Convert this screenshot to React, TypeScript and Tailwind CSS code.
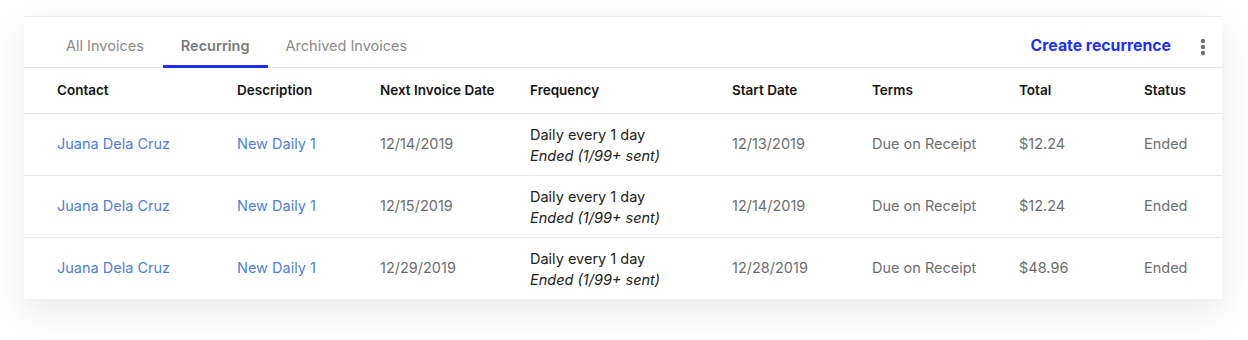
import React from 'react';

const rows = [
    { contact: 'Juana Dela Cruz', desc: 'New Daily 1', next: '12/14/2019', start: '12/13/2019', total: '$12.24' },
    { contact: 'Juana Dela Cruz', desc: 'New Daily 1', next: '12/15/2019', start: '12/14/2019', total: '$12.24' },
    { contact: 'Juana Dela Cruz', desc: 'New Daily 1', next: '12/29/2019', start: '12/28/2019', total: '$48.96' },
];

const cols = 'grid grid-cols-[213px_143px_150px_202px_140px_147px_125px_78px] items-center';

const App = () => {
    return (
        <div className="min-h-[340px] w-full bg-white pt-4 pl-6" style={{ fontFamily: 'Inter, "Noto Sans", sans-serif' }}>
            <div className="w-[1198px] bg-white border-t border-[#ececec] shadow-[0_12px_32px_rgba(0,0,0,0.09)]">
                <div className="flex h-[51px] items-stretch border-b border-[#e8e8e8] pl-[23px] pr-[16px]">
                    <div className="flex items-center px-[19px] pt-[8px] text-[14.5px] text-[#8a8a8a]">All Invoices</div>
                    <div className="relative flex items-center px-[18px] pt-[8px] text-[14.5px] font-semibold text-[#7a7a7a]">
                        Recurring
                        <span className="absolute left-0 right-0 -bottom-px h-[3px] bg-[#1f2ff5]"></span>
                    </div>
                    <div className="flex items-center px-[18px] pt-[8px] text-[14.5px] text-[#8a8a8a]">Archived Invoices</div>
                    <div className="ml-auto flex items-center gap-[29px] pt-[8px]">
                        <button className="text-[15.8px] font-bold text-[#2030f0]">Create recurrence</button>
                        <svg width="6" height="18" viewBox="0 0 6 18" className="mt-[1px]">
                            <circle cx="3" cy="3" r="2.2" fill="#6f6f6f" />
                            <circle cx="3" cy="9" r="2.2" fill="#6f6f6f" />
                            <circle cx="3" cy="15" r="2.2" fill="#6f6f6f" />
                        </svg>
                    </div>
                </div>

                <div className={`${cols} h-[46px] border-b border-[#e8e8e8] text-[13.5px] font-semibold text-[#151515]`}>
                    <div className="pl-[33px]">Contact</div>
                    <div>Description</div>
                    <div>Next Invoice Date</div>
                    <div>Frequency</div>
                    <div>Start Date</div>
                    <div>Terms</div>
                    <div>Total</div>
                    <div>Status</div>
                </div>

                {rows.map((r, i) => (
                    <div
                        key={i}
                        className={`${cols} ${i < rows.length - 1 ? 'h-[62px] border-b border-[#e8e8e8]' : 'h-[61px]'} text-[14.5px] text-[#6e6e6e]`}
                    >
                        <div className="pl-[33px] pb-px text-[#4f80d6]">{r.contact}</div>
                        <div className="pb-px text-[#4f80d6]">{r.desc}</div>
                        <div className="pb-px">{r.next}</div>
                        <div className="text-[#222] leading-[21px]">
                            <div>Daily every 1 day</div>
                            <div className="italic">Ended (1/99+ sent)</div>
                        </div>
                        <div className="pb-px">{r.start}</div>
                        <div className="pb-px">Due on Receipt</div>
                        <div className="pb-px">{r.total}</div>
                        <div className="pb-px">Ended</div>
                    </div>
                ))}
            </div>
        </div>
    );
};

export default App;
